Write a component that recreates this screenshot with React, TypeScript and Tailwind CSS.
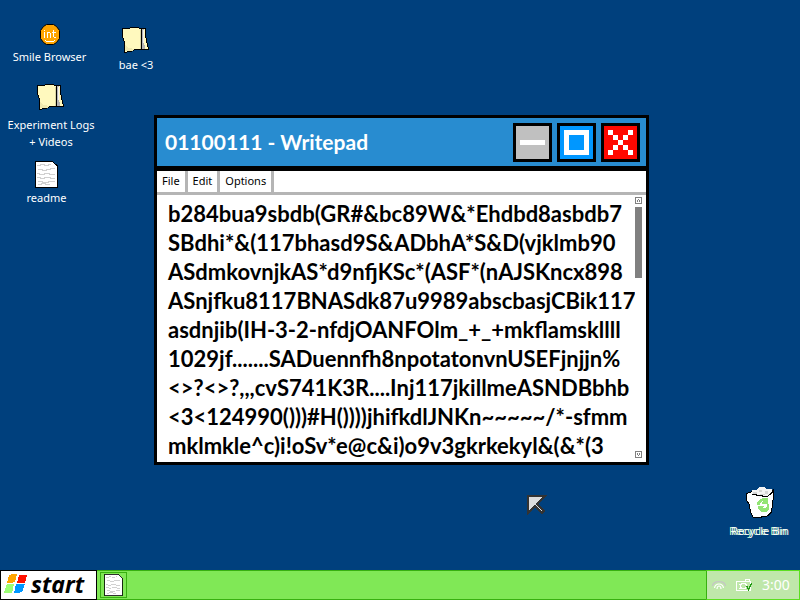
import React, { useState } from 'react';

const fileText = [
  'b284bua9sbdb(GR#&bc89W&*Ehdbd8asbdb7',
  'SBdhi*&(117bhasd9S&ADbhA*S&D(vjklmb90',
  'ASdmkovnjkAS*d9nfjKSc*(ASF*(nAJSKncx898',
  'ASnjfku8117BNASdk87u9989abscbasjCBik117',
  'asdnjib(IH-3-2-nfdjOANFOlm_+_+mkflamskllll',
  '1029jf.......SADuennfh8npotatonvnUSEFjnjjn%',
  '<>?<>?,,,cvS741K3R....Inj117jkillmeASNDBbhb',
  '<3<124990()))#H())))jhifkdlJNKn~~~~~/*-sfmm',
  'mklmkle^c)i!oSv*e@c&i)o9v3gkrkekyl&(&*(3'
].join('\n');

const BrowserIcon: React.FC = () => (
  <svg width="20" height="21" viewBox="0 0 20 21" aria-hidden="true">
    <path d="M6.5.5h7l3 2 3 4v8l-3 4-3 2h-7l-3-2-3-4v-8l3-4z" fill="#ffa500" stroke="#000" />
    <g stroke="#fff" fill="none" shapeRendering="crispEdges">
      <path d="M4.500 8v6M4.500 6v1M7.500 14V8M8 8.500h2M10.500 9v5M13.500 6v7M12 8.500h4M14 13.500h2" />
      <path d="M5 16.500h1M6 17.500h8M14 16.500h1" />
    </g>
  </svg>
);

const FolderIcon: React.FC = () => (
  <svg width="28" height="28" viewBox="0 0 28 28" shapeRendering="crispEdges" aria-hidden="true">
    <path d="M19 2.500h4.500v5l1 8 2 7.500H19z" fill="#fff9be" stroke="#000" />
    <path d="M.5 2.500H7L10.500 1h4L19 3v20.500h-6l-3 1.500-7.500 1.500V17L1 12z" fill="#fff9be" stroke="#000" />
    <path d="M20 3h2v12l1 8h-3z" fill="#b4b4b4" />
    <path d="M21 4h1v13h-1z" fill="#f0f0f0" />
    <path d="M18 4h1v19h-1z" fill="#d8d3a0" />
    <path d="M3 25v-6l4 3 5 1v1l-3 1z" fill="#f0e9ae" />
  </svg>
);

const NoteIcon: React.FC<{ className: string }> = ({ className }) => (
  <svg className={className} viewBox="0 0 23 27" shapeRendering="crispEdges" aria-hidden="true">
    <path d="M.5.500h17L22.500 5v21.500H.5z" fill="#fff" stroke="#000" />
    <path
      d="M2 4.500h3l1-1h3l1 1h3l1-1h2M3 8.500h4l1 1h3l1-1h3l1-1h4M2 12.500h2l1 1h4l1-1h4l1 1h5M2 16.500h3l1 1h3l1-1h5l1 1h4M3 20.500h4l1 1h5l1-1h6M3 23.500h3l1-1h3l1 1h4"
      fill="none"
      stroke="#d0d0d0"
      strokeWidth="1.200"
    />
  </svg>
);

const BinIcon: React.FC = () => (
  <svg width="29" height="31" viewBox="0 0 29 31" shapeRendering="crispEdges" aria-hidden="true">
    <path
      d="M.5 6.500L6 4.500l6 1h8l7.500-2.500v5l-1 10-1 7-4 4-6 1H7l-2-4-2-9L.5 13z"
      fill="#fff"
      stroke="#000"
    />
    <path d="M6 8V3h5l2-3h5l2 2h6v4l-6 4h-6l-4-2z" fill="#f4f4f4" />
    <path d="M7 5h4v2H7zM13 3h3v2h-3zM19 4h3v3h-3zM14 7h5v1h-5z" fill="#d5d5d5" />
    <path d="M6 7.500h3l3 1h3l3 1h3l3-2 3-3" fill="none" stroke="#000" />
    <path d="M14 12l3-1h5v6h-6v-2l2-1h-2l-2 2v2h-3v-3zM12 19h6l-1 2h2l2-2v-2h2v5l-3 3h-5l-1-2-2-1z" fill="#93e575" />
  </svg>
);

const WindowsLogo: React.FC = () => (
  <svg width="24" height="20" viewBox="0 0 24 20" shapeRendering="crispEdges" aria-hidden="true">
    <path d="M5 1l4-1h4l-2 8-4 1H3z" fill="#ffa500" />
    <path d="M15 1h8l-2 8h-8z" fill="#f10" />
    <path d="M3 10h7l-2 9H0z" fill="#9cff75" />
    <path d="M12 10h9l-3 8-4 1h-4z" fill="#0097ff" />
  </svg>
);

const WifiIcon: React.FC = () => (
  <svg width="14" height="9" viewBox="0 0 14 9" fill="none" aria-hidden="true">
    <path d="M.5 5C1 2 4 .7 7 .7S13 2 13.500 5" stroke="#c5c5c5" strokeWidth="1.300" />
    <path d="M2.500 7C3 4 5 3 7 3s4 1 4.500 4" stroke="#fff" strokeWidth="1.200" />
    <path d="M5 8c0-2 1-3 2-3s2 1 2 3" stroke="#fff" strokeWidth="1.200" />
  </svg>
);

const DeviceIcon: React.FC = () => (
  <svg width="16" height="13" viewBox="0 0 16 13" fill="none" shapeRendering="crispEdges" aria-hidden="true">
    <path d="M.5 2.500h14v9H.5zM9.500 2V.500h4V2M3 5.500h2M3 9.500h2" stroke="#fff" />
    <path d="M5.500 4.500h4l1 2-1 3h-4l-1-2z" stroke="#fff" />
    <path d="M10.500 7l2 3.500 3-6.500" stroke="#1f9a12" strokeWidth="1.300" />
  </svg>
);

interface DesktopIconProps {
  label: string;
  className: string;
  children: React.ReactNode;
}

const DesktopIcon: React.FC<DesktopIconProps> = ({ label, className, children }) => (
  <button
    type="button"
    className={`absolute flex flex-col items-center text-center text-[11px] leading-[17px] text-white ${className}`}
  >
    {children}
    <span>{label}</span>
  </button>
);

const WritepadWindow: React.FC = () => {
  const [text, setText] = useState(fileText);

  return (
    <section
      aria-label="Writepad"
      className="absolute left-[154px] top-[115px] flex w-[495px] flex-col border-3 border-black bg-white"
    >
      {/* Title bar */}
      <header className="flex h-[53px] items-center justify-between border-b-5 border-black bg-[#288cd0] pl-2 pr-1.5">
        <h1 className="font-['Lato'] text-[21px] font-bold text-white">01100111 - Writepad</h1>
        <div className="flex gap-[5px]">
          <button
            type="button"
            aria-label="Minimize"
            className="flex size-[39px] items-center justify-center border-3 border-black bg-[#c0c0c0]"
          >
            <span className="h-[5px] w-[25px] bg-white" />
          </button>
          <button
            type="button"
            aria-label="Maximize"
            className="flex size-[39px] items-center justify-center border-3 border-black bg-[#0097ff]"
          >
            <span className="size-[25px] border-5 border-white" />
          </button>
          <button
            type="button"
            aria-label="Close"
            className="flex size-[39px] items-center justify-center border-3 border-black bg-[#ff0800]"
          >
            <svg width="25" height="25" viewBox="0 0 5 5" fill="#fff" shapeRendering="crispEdges">
              <path d="M0 0h1v1H0zM4 0h1v1H4zM1 1h1v1H1zM3 1h1v1H3zM2 2h1v1H2zM1 3h1v1H1zM3 3h1v1H3zM0 4h1v1H0zM4 4h1v1H4z" />
            </svg>
          </button>
        </div>
      </header>

      {/* Menu */}
      <nav className="flex h-6 border-b-3 border-[#b5b5b5] text-[11px] text-black">
        <button type="button" className="border-r-3 border-[#b5b5b5] px-[5px]">File</button>
        <button type="button" className="border-r-3 border-[#b5b5b5] px-[5px]">Edit</button>
        <button type="button" className="border-r-3 border-[#b5b5b5] px-[5px]">Options</button>
      </nav>

      {/* Document */}
      <div className="flex">
        <textarea
          aria-label="Document text"
          rows={9}
          wrap="off"
          spellCheck={false}
          value={text}
          onChange={(e) => setText(e.target.value)}
          className="block min-w-0 flex-1 resize-none overflow-hidden pb-0.5 pl-[11px] pt-1 font-['Lato'] text-[22px] font-bold leading-[29px] text-black outline-none"
        />
        <div className="mr-1 flex w-[7px] flex-col justify-between pb-1 pt-0.5">
          <div className="flex flex-col gap-[3px]">
            <button type="button" aria-label="Scroll up" className="block size-[7px]">
              <svg width="7" height="7" fill="none" stroke="#808080" shapeRendering="crispEdges">
                <path d="M.5.500h6v6h-6zM2.500 5V3M3 2.500h1M4.500 5V3" />
              </svg>
            </button>
            <div className="h-[71px] bg-[#808080]" />
          </div>
          <button type="button" aria-label="Scroll down" className="block size-[7px]">
            <svg width="7" height="7" fill="none" stroke="#808080" shapeRendering="crispEdges">
              <path d="M.5.500h6v6h-6zM2.500 2v2M3 4.500h1M4.500 2v2" />
            </svg>
          </button>
        </div>
      </div>
    </section>
  );
};

const App: React.FC = () => {
  return (
    <div className="flex min-h-screen flex-col bg-[#00407d] font-['Noto_Sans',sans-serif]">
      <main className="relative flex-1 overflow-hidden">
        <DesktopIcon label="Smile Browser" className="left-2 top-6 w-[83px] gap-[3px]">
          <BrowserIcon />
        </DesktopIcon>
        <DesktopIcon label="bae <3" className="left-[108px] top-[26px] w-14 gap-0.5">
          <FolderIcon />
        </DesktopIcon>
        <DesktopIcon label="Experiment Logs + Videos" className="left-1 top-[83px] w-[94px] gap-[5px]">
          <FolderIcon />
        </DesktopIcon>
        <DesktopIcon label="readme" className="left-4 top-[161px] w-[61px] gap-px">
          <NoteIcon className="h-[27px] w-[23px]" />
        </DesktopIcon>
        <DesktopIcon
          label="Recycle Bin"
          className="bottom-[31px] right-2 w-16 gap-1 [text-shadow:-2px_0_0_#d9ffc8]"
        >
          <BinIcon />
        </DesktopIcon>

        <WritepadWindow />

        {/* Pointer */}
        <svg
          className="absolute left-[527px] top-[495px]"
          width="20"
          height="20"
          viewBox="0 0 20 20"
          shapeRendering="crispEdges"
          aria-hidden="true"
        >
          <path d="M1 1h17l-8 8 7 7-2 2-7-7-7 7z" fill="#ddd" stroke="#333" strokeWidth="2" />
        </svg>
      </main>

      {/* Taskbar */}
      <footer className="flex h-[30px] items-stretch bg-[#80e856]">
        <button
          type="button"
          className="flex w-[97px] items-center gap-[3px] border border-black bg-white pb-0.5 pl-[3px] text-[23px] font-bold italic leading-none text-black"
        >
          <WindowsLogo />
          <span>start</span>
        </button>
        <div className="flex flex-1 items-center border-y border-[#38b010] pl-[3px]">
          <button
            type="button"
            aria-label="Writepad"
            className="flex h-[26px] w-[27px] items-center justify-center border border-[#38b010]"
          >
            <NoteIcon className="h-[22px] w-[19px]" />
          </button>
        </div>
        <div className="flex w-[94px] items-center border border-[#5cdf20] border-l-[#38b010] bg-[#bfe7aa] pl-[5px] text-white">
          <WifiIcon />
          <span className="ml-2.5 mr-2.5">
            <DeviceIcon />
          </span>
          <time className="text-sm">3:00</time>
        </div>
      </footer>
    </div>
  );
};

export default App;
